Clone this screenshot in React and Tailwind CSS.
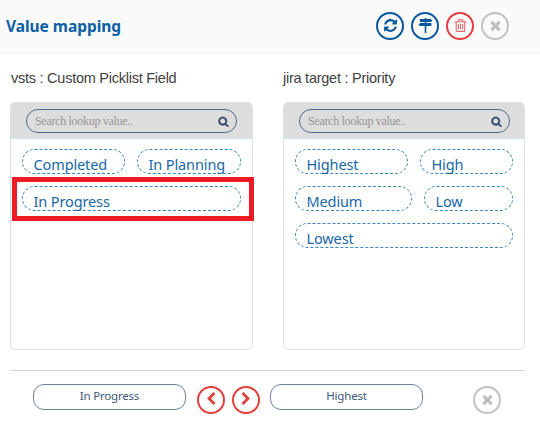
const PATHS = {
  refresh:
    'M1639 1056q0 5-1 7-64 268-268 434.5t-478 166.5q-146 0-282.5-55t-243.5-157l-129 129q-19 19-45 19t-45-19-19-45v-448q0-26 19-45t45-19h448q26 0 45 19t19 45-19 45l-137 137q71 66 161 102t187 36q134 0 250-65t186-179q11-17 53-117 8-23 30-23h192q13 0 22.5 9.5t9.5 22.5zm25-800v448q0 26-19 45t-45 19h-448q-26 0-45-19t-19-45 19-45l138-138q-148-137-349-137-134 0-250 65t-186 179q-11 17-53 117-8 23-30 23h-199q-13 0-22.5-9.5t-9.5-22.5v-7q65-268 270-434.5t480-166.5q146 0 284 55.5t245 156.5l130-129q19-19 45-19t45 19 19 45z',
  signs:
    'M800 0h192v128h544l192 160-192 192h-1312v-352h576zM800 480h192v128h608v352h-1344l-192-176 192-176h544zM800 960h192v832h-192z',
  trash:
    'M704 736v576q0 14-9 23t-23 9h-64q-14 0-23-9t-9-23v-576q0-14 9-23t23-9h64q14 0 23 9t9 23zm256 0v576q0 14-9 23t-23 9h-64q-14 0-23-9t-9-23v-576q0-14 9-23t23-9h64q14 0 23 9t9 23zm256 0v576q0 14-9 23t-23 9h-64q-14 0-23-9t-9-23v-576q0-14 9-23t23-9h64q14 0 23 9t9 23zm128 724v-948h-896v948q0 22 7 40.5t14.5 27 10.5 8.5h832q3 0 10.5-8.5t14.5-27 7-40.5zm-672-1076h448l-48-117q-7-9-17-11h-317q-10 2-17 11zm928 32v64q0 14-9 23t-23 9h-96v948q0 83-47 143.5t-113 60.5h-832q-66 0-113-58.5t-47-141.5v-952h-96q-14 0-23-9t-9-23v-64q0-14 9-23t23-9h309l70-167q15-37 54-63t79-26h320q40 0 79 26t54 63l70 167h309q14 0 23 9t9 23z',
  times:
    'M1490 1322q0 40-28 68l-136 136q-28 28-68 28t-68-28l-294-294-294 294q-28 28-68 28t-68-28l-136-136q-28-28-28-68t28-68l294-294-294-294q-28-28-28-68t28-68l136-136q28-28 68-28t68 28l294 294 294-294q28-28 68-28t68 28l136 136q28 28 28 68t-28 68l-294 294 294 294q28 28 28 68z',
  search:
    'M1216 832q0-185-131.5-316.5t-316.5-131.5-316.5 131.5-131.5 316.5 131.5 316.5 316.5 131.5 316.5-131.5 131.5-316.5zm512 832q0 52-38 90t-90 38q-54 0-90-38l-343-342q-179 124-399 124-143 0-273.5-55.5t-225-150-150-225-55.5-273.5 55.5-273.5 150-225 225-150 273.5-55.5 273.5 55.5 225 150 150 225 55.5 273.5q0 220-124 399l343 343q37 37 37 90z',
  left:
    'M1427 301l-531 531 531 531q19 19 19 45t-19 45l-166 166q-19 19-45 19t-45-19l-742-742q-19-19-19-45t19-45l742-742q19-19 45-19t45 19l166 166q19 19 19 45t-19 45z',
};

function Icon({ name, className }) {
  return (
    <svg viewBox="0 0 1792 1792" fill="currentColor" className={`shrink-0 ${className}`}>
      <path d={PATHS[name]} />
    </svg>
  );
}

function RoundButton({ icon, color, size = 'size-[14px]' }) {
  return (
    <button className={`flex size-7 shrink-0 items-center justify-center rounded-full border-2 ${color}`}>
      <Icon name={icon} className={size} />
    </button>
  );
}

function Pill({ children, width }) {
  return (
    <div className={`h-[25px] rounded-[13px] border border-dashed border-[#3b87bd] pl-[10.5px] text-[14.5px] leading-[28px] tracking-[-0.12px] whitespace-nowrap text-[#1768a8] ${width}`}>
      {children}
    </div>
  );
}

function Panel({ children, width }) {
  return (
    <section className={`h-[248px] overflow-hidden rounded-[5px] border border-[#e0e0e0] bg-white ${width}`}>
      <div className="flex h-[36px] items-start border-b border-[#cde6ed] bg-[#dddddd] pt-[6px] pl-[15px]">
        <div className="flex h-[24px] w-[211px] items-center justify-between rounded-full border border-[#4f6787] pr-[7px] pl-[8px]">
          <span className="font-['Liberation_Serif',serif] text-[12px] leading-[22px] tracking-[-0.3px] text-[#969696]">Search lookup value..</span>
          <Icon name="search" className="size-[11px] stroke-[#304a70] [stroke-width:60] text-[#304a70]" />
        </div>
      </div>
      <div className="flex flex-wrap gap-x-[12px] gap-y-[12px] pt-[10px] pl-[11px]">{children}</div>
    </section>
  );
}

function Selected({ children, margin }) {
  return (
    <div className={`h-[26px] w-[153px] rounded-[11px] border border-[#6d819e] text-center text-[11.5px] leading-[22px] tracking-[-0.2px] text-[#40577a] ${margin}`}>
      {children}
    </div>
  );
}

export default function App() {
  return (
    <main className="h-[435px] w-[540px] overflow-hidden bg-white font-['Noto_Sans',sans-serif]">
      <header className="flex h-[54px] justify-between border-b border-[#f0f0f0] bg-[#fafafa] pr-[31px] pl-[6px]">
        <h1 className="text-[15.5px] leading-[53px] font-bold tracking-[-0.03px] text-[#0b60a3]">Value mapping</h1>
        <div className="flex gap-[7px] pt-[12px]">
          <RoundButton icon="refresh" color="border-[#07589d] pb-px text-[#07589d]" size="size-[15px]" />
          <RoundButton icon="signs" color="border-[#07589d] pb-px text-[#07589d]" size="size-[15px]" />
          <RoundButton icon="trash" color="border-[#e43e3e] pb-px text-[#e8676b]" size="size-[15px]" />
          <RoundButton icon="times" color="border-[#c2c2c2] pb-[2px] text-[#bebebe]" size="size-[15px]" />
        </div>
      </header>

      <div className="flex h-[48px] pl-[11px] font-['Liberation_Sans',sans-serif] text-[14.5px] leading-[48px] tracking-[-0.25px] text-[#414141]">
        <h2 className="w-[272px]">vsts : Custom Picklist Field</h2>
        <h2>jira target : Priority</h2>
      </div>

      <div className="relative flex gap-[30px] pl-[10px]">
        <Panel width="w-[243px]">
          <Pill width="w-[103px]">Completed</Pill>
          <Pill width="w-[104px]">In Planning</Pill>
          <Pill width="w-[219px]">In Progress</Pill>
        </Panel>
        <Panel width="w-[242px]">
          <Pill width="w-[113px]">Highest</Pill>
          <Pill width="w-[93px]">High</Pill>
          <Pill width="w-[117px]">Medium</Pill>
          <Pill width="w-[89px]">Low</Pill>
          <Pill width="w-[218px]">Lowest</Pill>
        </Panel>
        <div className="pointer-events-none absolute top-[75px] left-[12px] h-[44px] w-[242px] border-[5px] border-[#ed1c24]" />
      </div>

      <footer className="mt-[20px] ml-[10px] flex w-[515px] border-t border-[#d5d5d5] pt-[13px] pl-[23px]">
        <Selected>In Progress</Selected>
        <div className="mt-[2px] ml-[11px] flex gap-[7px]">
          <RoundButton icon="left" color="border-[#e2403b] text-[#e2403b] pb-[3px]" />
          <RoundButton icon="left" color="rotate-180 border-[#e2403b] text-[#e2403b] pt-[3px]" />
        </div>
        <Selected margin="ml-[10px]">Highest</Selected>
        <div className="mt-[2px] ml-[50px]">
          <RoundButton icon="times" color="border-[#c2c2c2] pb-[2px] text-[#bebebe]" size="size-[15px]" />
        </div>
      </footer>
    </main>
  );
}
